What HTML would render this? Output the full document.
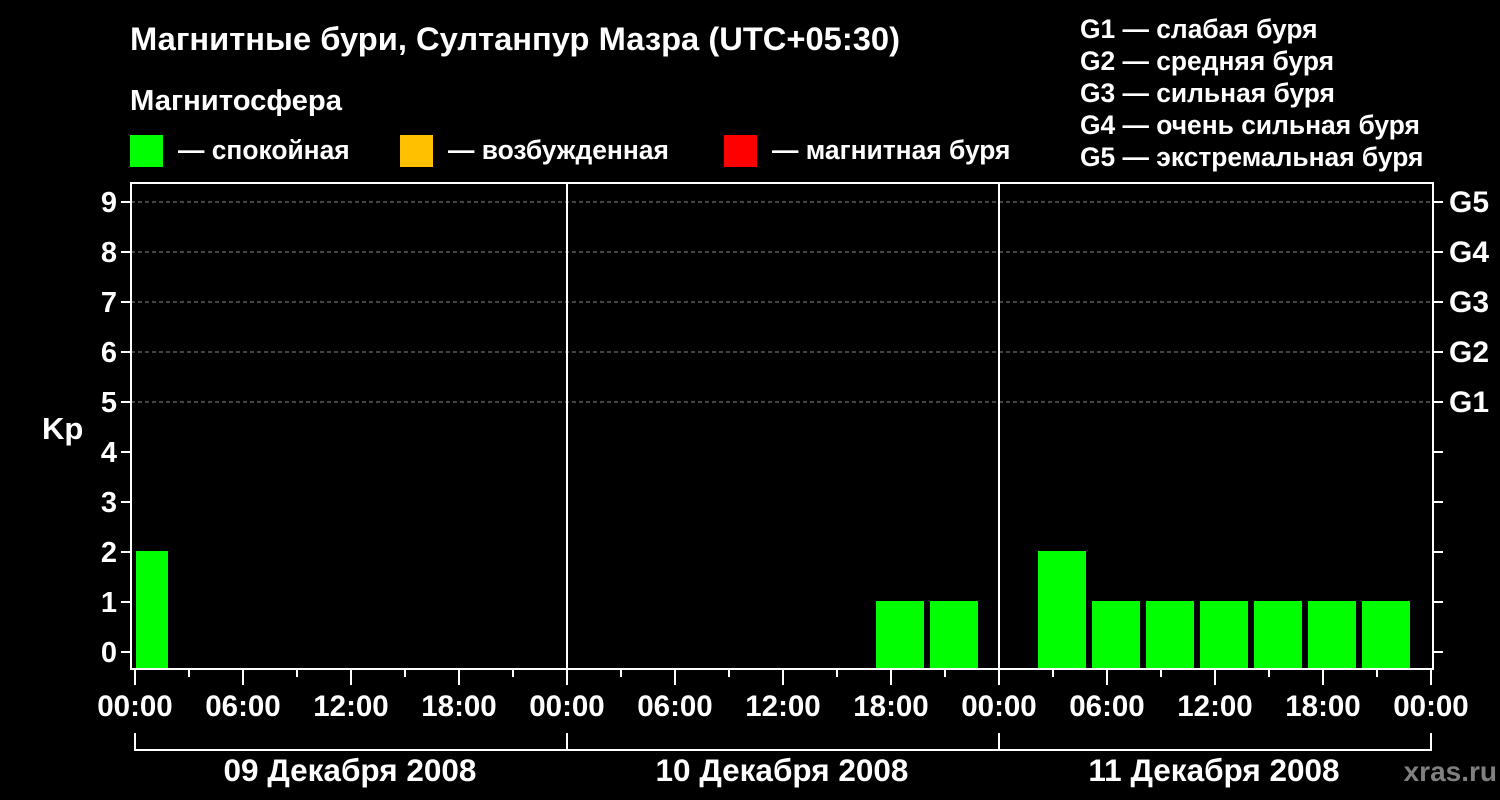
<!DOCTYPE html>
<html><head><meta charset="utf-8"><style>
html,body{margin:0;padding:0;background:#000;width:1500px;height:800px;overflow:hidden}
svg text{font-family:"Liberation Sans",Arial,sans-serif;font-weight:bold;fill:#fff}
</style></head><body>
<svg width="1500" height="800" xmlns="http://www.w3.org/2000/svg">
<rect width="1500" height="800" fill="#000"/>
<text x="130" y="50" font-size="32" textLength="770" lengthAdjust="spacingAndGlyphs">Магнитные бури, Султанпур Мазра (UTC+05:30)</text>
<text x="130" y="110" font-size="29" textLength="212" lengthAdjust="spacingAndGlyphs">Магнитосфера</text>
<rect x="130" y="135" width="33" height="32" fill="#00ff00"/>
<text x="178" y="159" font-size="26.4">— спокойная</text>
<rect x="400" y="135" width="33" height="32" fill="#ffc000"/>
<text x="448" y="159" font-size="26.4">— возбужденная</text>
<rect x="724" y="135" width="33" height="32" fill="#ff0000"/>
<text x="772" y="159" font-size="26.4">— магнитная буря</text>
<g font-size="26.4">
<text x="1080" y="38">G1 — слабая буря</text>
<text x="1080" y="70">G2 — средняя буря</text>
<text x="1080" y="102">G3 — сильная буря</text>
<text x="1080" y="134">G4 — очень сильная буря</text>
<text x="1080" y="166">G5 — экстремальная буря</text>
</g>
<g stroke="#888" stroke-width="1" stroke-dasharray="4,3">
<line x1="131" y1="202" x2="1432" y2="202"/><line x1="131" y1="252" x2="1432" y2="252"/>
<line x1="131" y1="302" x2="1432" y2="302"/><line x1="131" y1="352" x2="1432" y2="352"/>
<line x1="131" y1="402" x2="1432" y2="402"/>
</g>
<g fill="#00ff00">
<rect x="136" y="551" width="32" height="117"/>
<rect x="876" y="601" width="48" height="67"/><rect x="930" y="601" width="48" height="67"/>
<rect x="1038" y="551" width="48" height="117"/>
<rect x="1092" y="601" width="48" height="67"/><rect x="1146" y="601" width="48" height="67"/>
<rect x="1200" y="601" width="48" height="67"/><rect x="1254" y="601" width="48" height="67"/>
<rect x="1308" y="601" width="48" height="67"/><rect x="1362" y="601" width="48" height="67"/>
</g>
<g stroke="#fff" stroke-width="2" fill="none">
<rect x="131" y="183" width="1302" height="486"/>
<line x1="567" y1="183" x2="567" y2="669"/><line x1="999" y1="183" x2="999" y2="669"/>
<path d="M121 202h10M121 252h10M121 302h10M121 352h10M121 402h10M121 452h10M121 502h10M121 552h10M121 602h10M121 652h10"/>
<path d="M1433 202h10M1433 252h10M1433 302h10M1433 352h10M1433 402h10M1433 452h10M1433 502h10M1433 552h10M1433 602h10M1433 652h10"/>
<path d="M135 670v15M243 670v15M351 670v15M459 670v15M567 670v15M675 670v15M783 670v15M891 670v15M999 670v15M1107 670v15M1215 670v15M1323 670v15M1431 670v15"/>
<path d="M189 670v7M297 670v7M405 670v7M513 670v7M621 670v7M729 670v7M837 670v7M945 670v7M1053 670v7M1161 670v7M1269 670v7M1377 670v7"/>
<path d="M135 733v17h1296v-17M567 733v17M999 733v17"/>
</g>
<g font-size="29" text-anchor="end">
<text x="117" y="212">9</text><text x="117" y="262">8</text><text x="117" y="312">7</text>
<text x="117" y="362">6</text><text x="117" y="412">5</text><text x="117" y="462">4</text>
<text x="117" y="512">3</text><text x="117" y="562">2</text><text x="117" y="612">1</text><text x="117" y="662">0</text>
</g>
<text x="42" y="439" font-size="31">Kp</text>
<g font-size="30">
<text x="1449" y="212">G5</text><text x="1449" y="262">G4</text><text x="1449" y="312">G3</text>
<text x="1449" y="362">G2</text><text x="1449" y="412">G1</text>
</g>
<g font-size="29.5" text-anchor="middle">
<text x="135" y="716">00:00</text><text x="243" y="716">06:00</text><text x="351" y="716">12:00</text><text x="459" y="716">18:00</text>
<text x="567" y="716">00:00</text><text x="675" y="716">06:00</text><text x="783" y="716">12:00</text><text x="891" y="716">18:00</text>
<text x="999" y="716">00:00</text><text x="1107" y="716">06:00</text><text x="1215" y="716">12:00</text><text x="1323" y="716">18:00</text>
<text x="1431" y="716">00:00</text>
</g>
<g font-size="31.5" text-anchor="middle">
<text x="350" y="781">09 Декабря 2008</text>
<text x="782" y="781">10 Декабря 2008</text>
<text x="1214" y="781">11 Декабря 2008</text>
</g>
<text x="1497" y="781" font-size="28" text-anchor="end" style="fill:#808080">xras.ru</text>
</svg>
</body></html>
